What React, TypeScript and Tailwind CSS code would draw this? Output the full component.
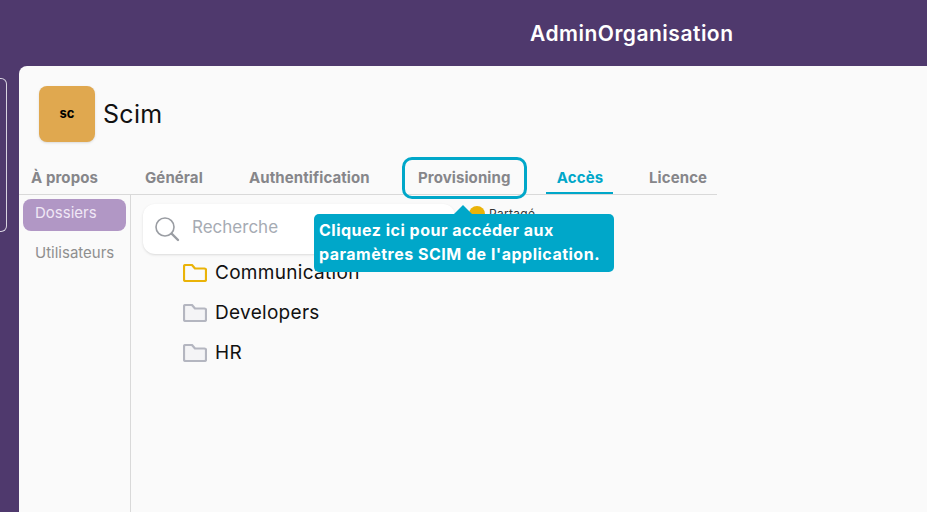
const font = { fontFamily: "Inter, 'Noto Sans', sans-serif" };

const tabs = [
  { label: "À propos", w: "w-[114px]" },
  { label: "Général", w: "w-[104px]" },
  { label: "Authentification", w: "w-[157px]" },
];

function Folder({ color, fill }: { color: string; fill: string }) {
  return (
    <svg width="24" height="18" viewBox="0 0 24 18" fill={fill} stroke={color} strokeWidth="2.2" strokeLinejoin="round">
      <path d="M1 2.5 Q1 1 2.5 1 H9 L12 4.5 H21.5 Q23 4.5 23 6 V15.5 Q23 17 21.5 17 H2.5 Q1 17 1 15.5 Z" />
    </svg>
  );
}

function FolderRow({ name, active }: { name: string; active?: boolean }) {
  return (
    <div className="flex items-center h-10 pl-10 gap-2">
      {active ? <Folder color="#eab308" fill="#fafafa" /> : <Folder color="#b4b6c0" fill="#f4f4f6" />}
      <span className="text-[19px] mt-[1px] tracking-[0.3px] text-[#111]">{name}</span>
    </div>
  );
}

export default function App() {
  return (
    <div className="relative w-[927px] h-[512px] overflow-hidden bg-[#4f396d] flex flex-col" style={font}>
      <header className="h-[66px] shrink-0 flex items-center pl-[530px] pt-[1px] text-white text-[21px] tracking-[0.5px] font-semibold">
        AdminOrganisation
      </header>
      <div className="flex flex-1 min-h-0">
        <div className="w-[19px] shrink-0 pt-3">
          <div className="w-[7px] h-[154px] border border-l-0 border-[#d8d3e0] rounded-r-md" />
        </div>
        <main className="flex-1 bg-[#fafafa] rounded-tl-lg flex flex-col">
          <div className="flex items-start gap-2 pl-5 pt-5 h-[91px] shrink-0">
            <div className="w-14 h-14 rounded-lg bg-[#e0a84f] flex items-center justify-center text-[13px] font-bold text-black shadow-sm">
              sc
            </div>
            <h1 className="text-[25px] leading-[56px] tracking-[0.3px] text-[#111]">Scim</h1>
          </div>
          <nav className="w-[698px] h-[38px] shrink-0 flex border-b border-[#d9d9d9] text-[15px] tracking-[0.1px] font-bold text-[#86868a]">
            {tabs.map((t) => (
              <div key={t.label} className={`${t.w} pl-3 pt-[10px]`}>{t.label}</div>
            ))}
            <div className="w-[152px] pl-6 pt-[10px]">Provisioning</div>
            <div className="w-[67px] h-[37px] pt-[10px] pl-[1px] text-center text-[#00a7c9] border-b-2 border-[#00a7c9]">Accès</div>
            <div className="pl-9 pt-[10px]">Licence</div>
          </nav>
          <div className="flex flex-1 min-h-0">
            <aside className="w-[112px] shrink-0 border-r border-[#d9d9d9] pl-1 pr-1 pt-1 text-[15px]">
              <div className="h-8 w-[103px] rounded-lg bg-[#b197c5] text-[#f0e8f6] pl-3 pt-[3px]">Dossiers</div>
              <div className="h-8 pl-3 mt-2 pt-[3px] text-[#8f8f8f]">Utilisateurs</div>
            </aside>
            <section className="flex-1 pl-3">
              <div className="flex items-start h-[58px] pt-[9px]">
                <div className="w-[312px] h-[50px] bg-white rounded-xl shadow-sm flex items-center gap-3 pl-[11px]">
                  <svg width="26" height="26" viewBox="0 0 26 26" fill="none" stroke="#9a9da3" strokeWidth="1.6" strokeLinecap="round">
                    <circle cx="11" cy="11" r="9" />
                    <path d="M17.5 17.5 L24 24" strokeWidth="2.4" />
                  </svg>
                  <span className="text-[17px] mb-[3px] text-[#a6abb3]">Recherche</span>
                </div>
                <div className="flex items-center gap-1 ml-[14px] mt-[1px] text-[12px] tracking-[0.3px] text-[#333]">
                  <span className="w-4 h-4 rounded-full bg-[#eab308]" />
                  Partagé
                </div>
              </div>
              <FolderRow name="Communication" active />
              <FolderRow name="Developers" />
              <FolderRow name="HR" />
            </section>
          </div>
        </main>
      </div>
      <div className="absolute left-[402px] top-[157px] w-[125px] h-[42px] rounded-[10px] border-[3px] border-[#00a7c9]" />
      <div className="absolute left-[454px] top-[205px] w-0 h-0 border-x-[9px] border-x-transparent border-b-[9px] border-b-[#00a7c9]" />
      <div className="absolute left-[314px] top-[214px] w-[300px] h-[58px] rounded-[5px] bg-[#00a7c9] text-white text-[16px] tracking-[0.5px] font-bold leading-6 pl-[5px] pt-[4px]">
        Cliquez ici pour accéder aux
        <br />
        paramètres SCIM de l'application.
      </div>
    </div>
  );
}
